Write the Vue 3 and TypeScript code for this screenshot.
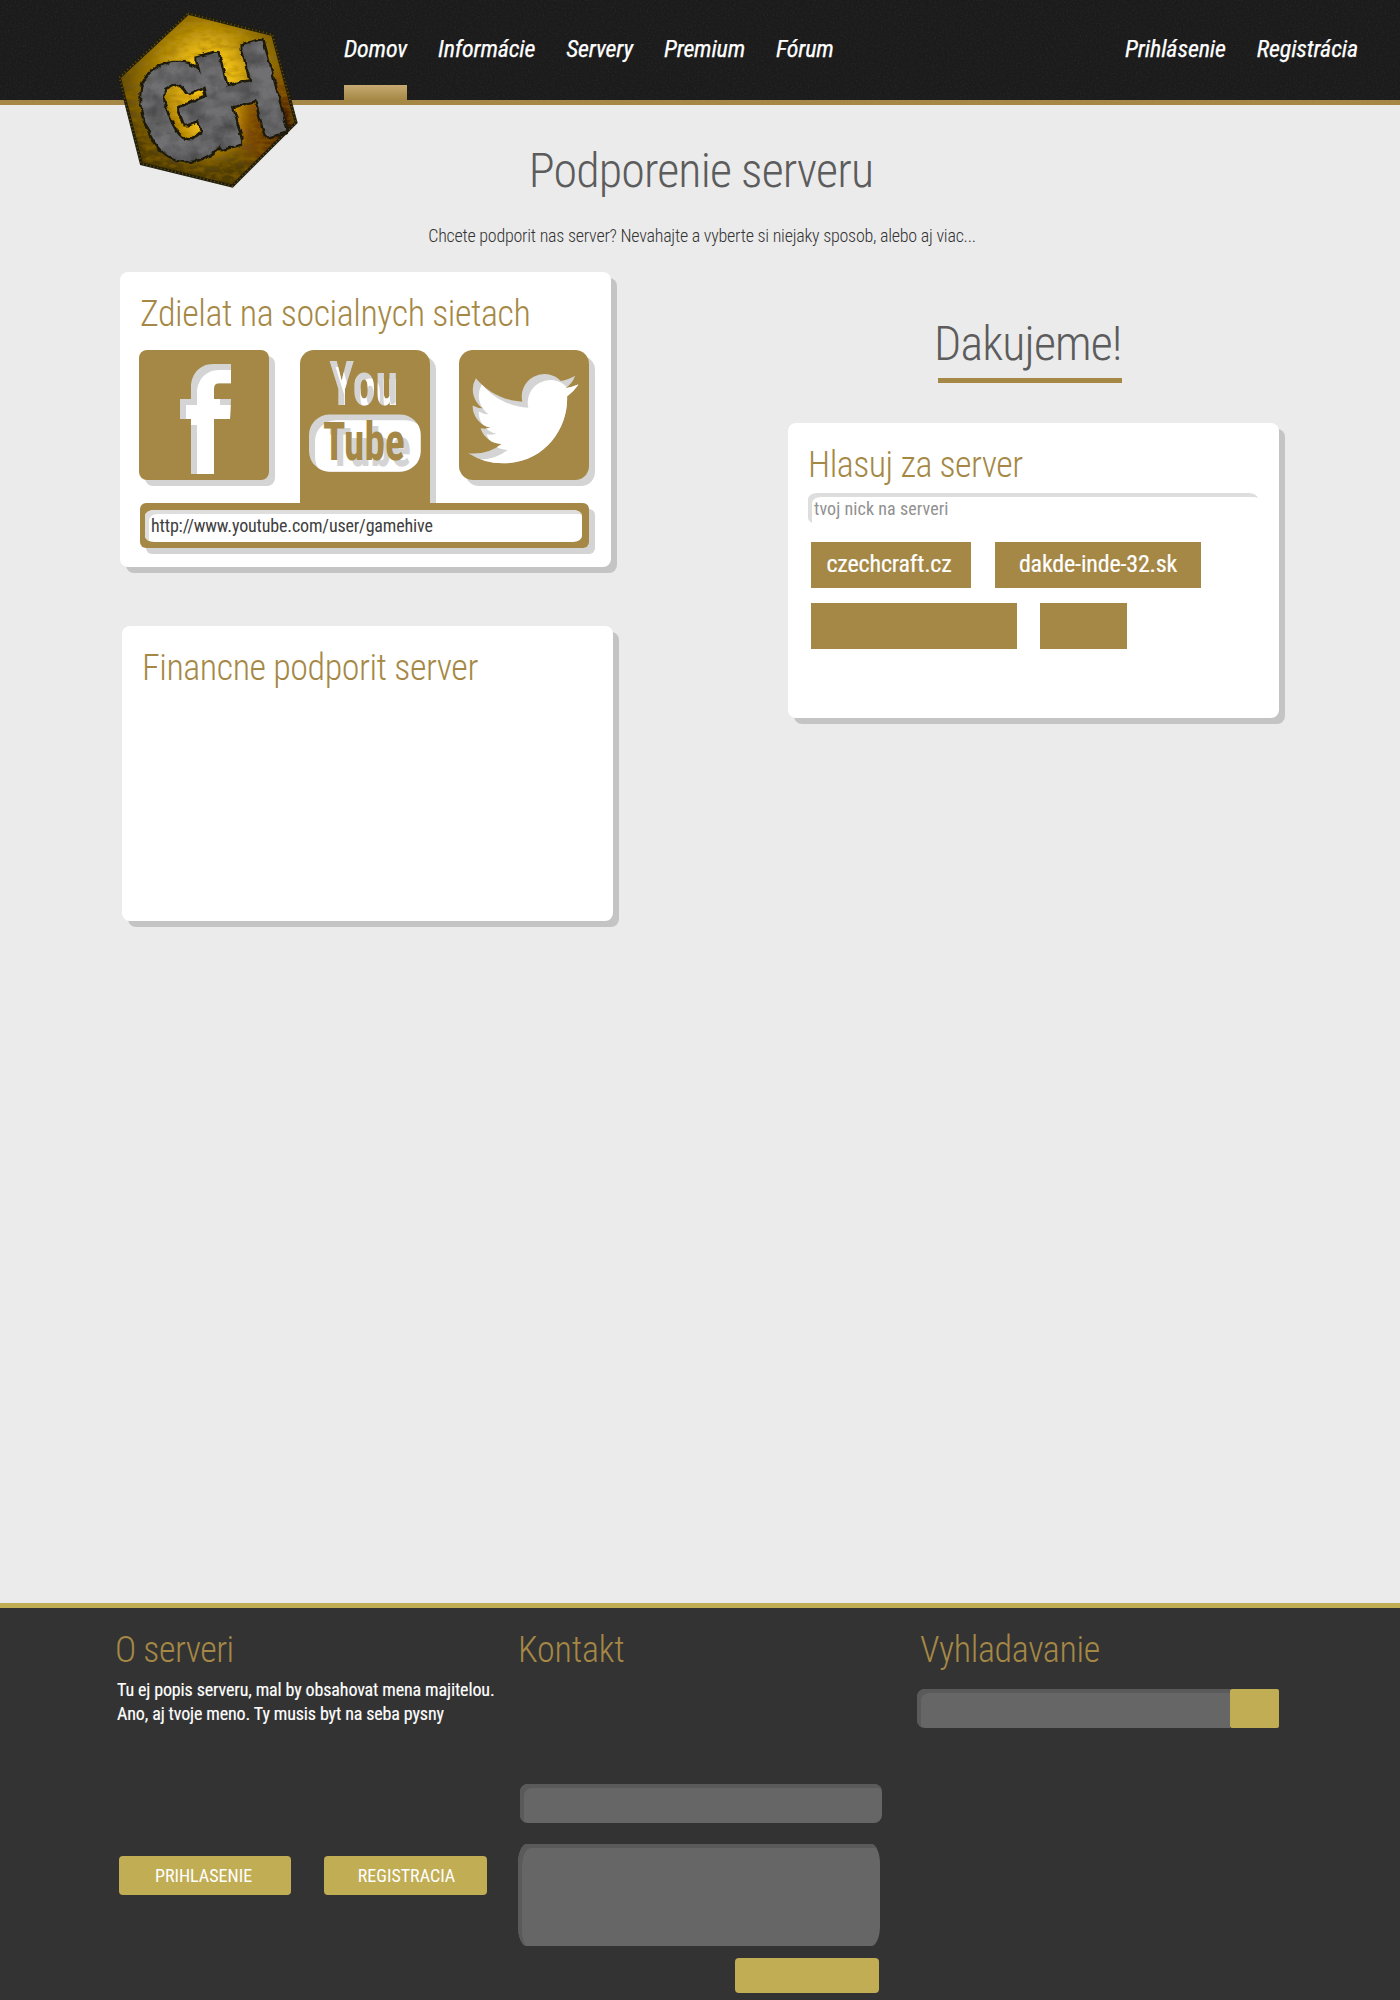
<script setup lang="ts">
interface NavItem {
  label: string
  active?: boolean
}

const mainNav: NavItem[] = [
  { label: 'Domov', active: true },
  { label: 'Informácie' },
  { label: 'Servery' },
  { label: 'Premium' },
  { label: 'Fórum' },
]

const userNav: NavItem[] = [{ label: 'Prihlásenie' }, { label: 'Registrácia' }]

const voteRows: { label: string; width: number }[][] = [
  [
    { label: 'czechcraft.cz', width: 160 },
    { label: 'dakde-inde-32.sk', width: 206 },
  ],
  [
    { label: '', width: 206 },
    { label: '', width: 87 },
  ],
]

const birdPath =
  'M23.953 4.57a10 10 0 01-2.825.775 4.958 4.958 0 002.163-2.723c-.951.555-2.005.959-3.127 1.184a4.92 4.92 0 00-8.384 4.482C7.69 8.095 4.067 6.13 1.64 3.162a4.822 4.822 0 00-.666 2.475c0 1.71.87 3.213 2.188 4.096a4.904 4.904 0 01-2.228-.616v.06a4.923 4.923 0 003.946 4.827 4.996 4.996 0 01-2.212.085 4.936 4.936 0 004.604 3.417 9.867 9.867 0 01-6.102 2.105c-.39 0-.779-.023-1.17-.067a13.995 13.995 0 007.557 2.209c9.053 0 13.998-7.496 13.998-13.985 0-.21 0-.42-.015-.63A9.935 9.935 0 0024 4.59z'

const fPath =
  'M276 42H222C180 42 156 75 156 112V147H123V207H156V372H225V207H273L276 147H225V115Q225 100 240 100H276Z'

const hexPath = 'M264 40 518 104 588 368 397 558 124 491 58 232Z'
</script>

<template>
  <div class="page">
    <header class="header">
      <svg class="grain" width="1400" height="100" aria-hidden="true">
        <filter id="grain" x="0" y="0" width="100%" height="100%">
          <feTurbulence type="fractalNoise" baseFrequency="0.6" numOctaves="2" seed="4" />
          <feColorMatrix values="0 0 0 0 1  0 0 0 0 1  0 0 0 0 1  0.1 0 0 0 -0.045" />
        </filter>
        <rect width="1400" height="100" filter="url(#grain)" />
      </svg>
      <svg class="logo" width="220" height="200" viewBox="0 0 660 600" role="img" aria-label="GH">
        <defs>
          <radialGradient id="gold" gradientUnits="userSpaceOnUse" cx="325" cy="225" r="300">
            <stop offset="0" stop-color="#ffe026" />
            <stop offset="0.25" stop-color="#e8b818" />
            <stop offset="0.6" stop-color="#98740c" />
            <stop offset="1" stop-color="#4d3a06" />
          </radialGradient>
          <radialGradient id="rust" gradientUnits="userSpaceOnUse" cx="560" cy="370" r="190">
            <stop offset="0" stop-color="#3a1500" stop-opacity="0.95" />
            <stop offset="0.6" stop-color="#7a3a05" stop-opacity="0.6" />
            <stop offset="1" stop-color="#a05a08" stop-opacity="0" />
          </radialGradient>
          <radialGradient id="glow" gradientUnits="userSpaceOnUse" cx="320" cy="370" r="130">
            <stop offset="0" stop-color="#ffd21c" />
            <stop offset="1" stop-color="#ffb010" stop-opacity="0" />
          </radialGradient>
          <filter id="rough" filterUnits="userSpaceOnUse" x="60" y="40" width="540" height="520" color-interpolation-filters="sRGB">
            <feMorphology in="SourceAlpha" operator="dilate" radius="10" result="wide" />
            <feFlood flood-color="#1d1a0c" />
            <feComposite in2="wide" operator="in" result="edge" />
            <feMorphology in="SourceGraphic" operator="dilate" radius="2" result="body" />
            <feTurbulence type="fractalNoise" baseFrequency="0.015 0.02" numOctaves="4" seed="3" />
            <feColorMatrix values="0 0 0 0 0.15  0 0 0 0 0.15  0 0 0 0 0.15  1 0 0 0 -0.35" />
            <feComposite in2="body" operator="in" result="spots" />
            <feMerge result="letters">
              <feMergeNode in="edge" />
              <feMergeNode in="body" />
              <feMergeNode in="spots" />
            </feMerge>
            <feTurbulence type="fractalNoise" baseFrequency="0.05" numOctaves="2" seed="7" result="n" />
            <feDisplacementMap in="letters" in2="n" scale="14" xChannelSelector="R" yChannelSelector="G" />
          </filter>
          <filter id="worn" x="-5%" y="-5%" width="110%" height="110%">
            <feTurbulence type="fractalNoise" baseFrequency="0.03 0.06" numOctaves="4" seed="11" />
            <feColorMatrix values="0 0 0 0 0.3  0 0 0 0 0.15  0 0 0 0 0  1.2 0 0 0 -0.5" />
            <feComposite in2="SourceGraphic" operator="in" result="spots" />
            <feMerge>
              <feMergeNode in="SourceGraphic" />
              <feMergeNode in="spots" />
            </feMerge>
          </filter>
        </defs>
        <g filter="url(#worn)">
          <path :d="hexPath" fill="url(#gold)" />
          <path :d="hexPath" fill="url(#rust)" />
          <circle cx="320" cy="370" r="130" fill="url(#glow)" />
        </g>
        <path :d="hexPath" fill="none" stroke="#211d0a" stroke-width="9" />
        <path :d="hexPath" fill="none" stroke="#5d5420" stroke-width="5" stroke-dasharray="3 8" />
        <g class="logo-text" filter="url(#rough)">
          <text transform="translate(240 338) rotate(-22)" x="-116" y="142" font-size="400" textLength="236" lengthAdjust="spacingAndGlyphs">G</text>
          <text transform="translate(425 284) rotate(-15)" x="-116" y="138" font-size="388" textLength="232" lengthAdjust="spacingAndGlyphs">H</text>
        </g>
      </svg>
      <nav class="nav">
        <a v-for="item in mainNav" :key="item.label" class="nav-link" :class="{ active: item.active }">{{ item.label }}</a>
      </nav>
      <nav class="nav user">
        <a v-for="item in userNav" :key="item.label" class="nav-link">{{ item.label }}</a>
      </nav>
    </header>

    <main class="main">
      <h1 class="title">Podporenie serveru</h1>
      <p class="lead">Chcete podporit nas server? Nevahajte a vyberte si niejaky sposob, alebo aj viac...</p>

      <div class="columns">
        <div class="column">
          <section class="card">
            <h2 class="card-title">Zdielat na socialnych sietach</h2>
            <div class="tiles">
              <svg class="tile small" viewBox="0 0 390 390" role="img" aria-label="Facebook">
                <clipPath id="f-clip"><path :d="fPath" /></clipPath>
                <path :d="fPath" fill="#d4d4d4" />
                <g clip-path="url(#f-clip)"><path :d="fPath" fill="#fff" transform="translate(18 18)" /></g>
              </svg>
              <svg class="tile tall" viewBox="0 0 390 459" role="img" aria-label="YouTube">
                <clipPath id="you-clip">
                  <text class="yt" x="88" y="165" font-size="181" textLength="206" lengthAdjust="spacingAndGlyphs">You</text>
                </clipPath>
                <clipPath id="pill-clip"><rect x="27" y="193" width="335" height="172" rx="62" /></clipPath>
                <text class="yt" x="88" y="165" font-size="181" textLength="206" lengthAdjust="spacingAndGlyphs" fill="#d4d4d4">You</text>
                <g clip-path="url(#you-clip)">
                  <text class="yt" x="106" y="183" font-size="181" textLength="206" lengthAdjust="spacingAndGlyphs" fill="#fff">You</text>
                </g>
                <g clip-path="url(#pill-clip)">
                  <rect x="27" y="193" width="335" height="172" fill="#d4d4d4" />
                  <rect x="45" y="211" width="335" height="172" rx="62" fill="#fff" />
                  <text class="yt" x="87" y="348" font-size="162" textLength="245" lengthAdjust="spacingAndGlyphs" fill="#d4d4d4">Tube</text>
                  <text class="yt" x="69" y="330" font-size="162" textLength="245" lengthAdjust="spacingAndGlyphs" fill="#a58845">Tube</text>
                </g>
              </svg>
              <svg class="tile" viewBox="0 0 390 390" role="img" aria-label="Twitter">
                <clipPath id="bird-clip"><path :d="birdPath" transform="translate(28 41) scale(13.75)" /></clipPath>
                <path :d="birdPath" fill="#d4d4d4" transform="translate(28 41) scale(13.75)" />
                <g clip-path="url(#bird-clip)">
                  <path :d="birdPath" fill="#fff" transform="translate(46 59) scale(13.75)" />
                </g>
              </svg>
            </div>
            <div class="url-bar"><div class="url-field">http://www.youtube.com/user/gamehive</div></div>
          </section>

          <section class="card second">
            <h2 class="card-title">Financne podporit server</h2>
          </section>
        </div>

        <div class="column right">
          <h2 class="thanks"><span>Dakujeme!</span></h2>
          <section class="card">
            <h2 class="card-title">Hlasuj za server</h2>
            <div class="nick">tvoj nick na serveri</div>
            <div v-for="(row, i) in voteRows" :key="i" class="votes">
              <a v-for="(vote, j) in row" :key="j" class="vote" :style="{ width: vote.width + 'px' }">{{ vote.label }}</a>
            </div>
          </section>
        </div>
      </div>
    </main>

    <footer class="footer">
      <section class="about">
        <h3>O serveri</h3>
        <p>Tu ej popis serveru, mal by obsahovat mena majitelou.<br />Ano, aj tvoje meno. Ty musis byt na seba pysny</p>
        <div class="actions">
          <a class="btn login">PRIHLASENIE</a>
          <a class="btn register">REGISTRACIA</a>
        </div>
      </section>
      <section class="contact">
        <h3>Kontakt</h3>
        <div class="field subject"></div>
        <div class="field message"></div>
        <div class="send"></div>
      </section>
      <section class="search">
        <h3>Vyhladavanie</h3>
        <div class="search-row">
          <div class="field query"></div>
          <div class="go"></div>
        </div>
      </section>
    </footer>
  </div>
</template>

<style>
body {
  margin: 0;
  background: #ebebeb;
}
</style>

<style scoped>
.page {
  width: 1400px;
  height: 2000px;
  display: flex;
  flex-direction: column;
  overflow: hidden;
  background: #ebebeb;
  font-family: 'Roboto Condensed', Roboto, 'Liberation Sans Narrow', sans-serif;
  font-stretch: 75%;
}
h1, h2, h3, p {
  margin: 0;
  font-weight: 300;
  white-space: nowrap;
}
.header {
  position: relative;
  box-sizing: border-box;
  height: 105px;
  flex: none;
  display: flex;
  justify-content: space-between;
  padding: 0 42px 0 344px;
  background: #1b1b1b;
  border-bottom: 5px solid #a58845;
}
.grain {
  position: absolute;
  left: 0;
  top: 0;
}
.logo {
  position: absolute;
  left: 100px;
  top: 0;
}
.logo-text {
  font-family: Roboto, sans-serif;
  font-weight: 900;
  font-stretch: normal;
  fill: #707072;
}
.nav {
  position: relative;
  display: flex;
  gap: 31px;
}
.nav-link {
  box-sizing: border-box;
  height: 100px;
  line-height: 98px;
  font-size: 24px;
  font-style: italic;
  letter-spacing: -0.18px;
  -webkit-text-stroke: 0.25px #fff;
  color: #fff;
}
.user .nav-link {
  letter-spacing: -0.13px;
}
.nav-link.active {
  background: linear-gradient(#c6aa72, #a58845) bottom / 100% 15px no-repeat;
}
.main {
  flex: none;
  height: 1498px;
}
.title {
  padding: 36px 0 0 2px;
  line-height: 60px;
  font-size: 48px;
  letter-spacing: -0.85px;
  text-align: center;
  color: #5c5c5c;
}
.lead {
  padding: 23px 0 0 4px;
  line-height: 24px;
  font-size: 18px;
  letter-spacing: -0.24px;
  text-align: center;
  color: #333;
}
.columns {
  display: flex;
  justify-content: space-between;
  padding: 24px 121px 0 120px;
}
.card {
  box-sizing: border-box;
  width: 491px;
  height: 295px;
  padding: 24px 20px 0;
  border-radius: 8px;
  background: #fff;
  box-shadow: 6px 6px 0 #c4c4c4;
}
.card.second {
  margin: 59px 0 0 2px;
}
.card-title {
  line-height: 36px;
  font-size: 36px;
  letter-spacing: -0.44px;
  color: #a58845;
}
.right .card-title {
  letter-spacing: -0.5px;
}
.tiles {
  display: flex;
  height: 153px;
  margin: 18px 2px 0 -1px;
}
.tile {
  flex: none;
  width: 130px;
  height: 130px;
  border-radius: 14px;
  background: #a58845;
  box-shadow: 6px 6px 0 #d4d4d4;
}
.tile.small {
  border-radius: 8px;
}
.tile.tall {
  height: 153px;
  margin: 0 29px 0 31px;
  border-radius: 14px 14px 0 0;
}
.yt {
  font-family: 'Roboto Condensed', Roboto, sans-serif;
  font-weight: 700;
}
.url-bar {
  position: relative;
  box-sizing: border-box;
  width: 449px;
  height: 45px;
  padding: 7px 7px 6px 5px;
  border-radius: 6px;
  background: #a58845;
  box-shadow: 6px 6px 0 #d4d4d4;
}
.url-field {
  height: 32px;
  padding-left: 6px;
  border-radius: 9px / 6px;
  background: #fff;
  box-shadow: inset 4px 4px 0 #dedede;
  line-height: 32px;
  font-size: 18px;
  letter-spacing: -0.15px;
  color: #404040;
}
.thanks {
  margin: 42px 0 40px 148px;
  display: flex;
  font-size: 48px;
  line-height: 60px;
  letter-spacing: -0.85px;
  color: #5c5c5c;
}
.thanks span {
  box-sizing: border-box;
  width: 184px;
  height: 69px;
  margin-left: 2px;
  text-indent: -4px;
  border-bottom: 5px solid #a58845;
}
.nick {
  box-sizing: border-box;
  width: 450px;
  height: 31px;
  margin: 10px 0 18px;
  padding: 1px 0 0 6px;
  border-radius: 9px / 6px;
  box-shadow: inset 4px 4px 0 #dedede;
  line-height: 30px;
  font-size: 18px;
  letter-spacing: 0.08px;
  color: #919191;
}
.votes {
  display: flex;
  gap: 24px;
  height: 46px;
  margin: 0 0 15px 3px;
}
.votes + .votes {
  gap: 23px;
}
.vote {
  background: #a58845;
  color: #fff;
  font-size: 24px;
  letter-spacing: -0.18px;
  -webkit-text-stroke: 0.2px #fff;
  line-height: 44px;
  text-align: center;
}
.vote:first-child {
  text-indent: -4px;
}
.footer {
  box-sizing: border-box;
  flex: none;
  height: 397px;
  display: flex;
  padding-top: 24px;
  border-top: 5px solid #c1ad54;
  background: #333;
}
.footer h3 {
  line-height: 36px;
  font-size: 36px;
  letter-spacing: -0.5px;
  color: #a58845;
}
.about {
  width: 403px;
  padding-left: 115px;
}
.about p {
  padding: 10px 0 0 2px;
  font-size: 18px;
  font-weight: 400;
  letter-spacing: -0.13px;
  -webkit-text-stroke: 0.15px #fff;
  line-height: 24px;
  color: #fff;
}
.actions {
  display: flex;
  gap: 33px;
  margin: 130px 0 0 4px;
}
.btn {
  height: 39px;
  border-radius: 4px;
  background: #c1ad54;
  color: #fff;
  font-size: 18px;
  line-height: 40px;
  text-align: center;
}
.login {
  width: 172px;
  text-indent: -3px;
}
.register {
  width: 163px;
  text-indent: 2px;
}
.contact {
  width: 402px;
}
.footer .contact h3 {
  letter-spacing: -0.2px;
}
.field {
  background: #666;
  box-shadow: inset 4px 4px 0 #5a5a5a;
  border-radius: 8px;
}
.subject {
  width: 362px;
  height: 39px;
  margin: 116px 0 0 2px;
}
.message {
  width: 362px;
  height: 102px;
  margin-top: 21px;
  border-radius: 9px / 20px;
}
.send {
  width: 144px;
  height: 35px;
  margin: 12px 0 0 217px;
  border-radius: 4px;
  background: #c1ad54;
}
.footer .search h3 {
  letter-spacing: -0.33px;
}
.search-row {
  display: flex;
  margin: 21px 0 0 -3px;
}
.query {
  width: 313px;
  height: 39px;
  border-radius: 8px 0 0 8px;
}
.go {
  width: 49px;
  height: 39px;
  border-radius: 2px;
  background: #c1ad54;
}
</style>
